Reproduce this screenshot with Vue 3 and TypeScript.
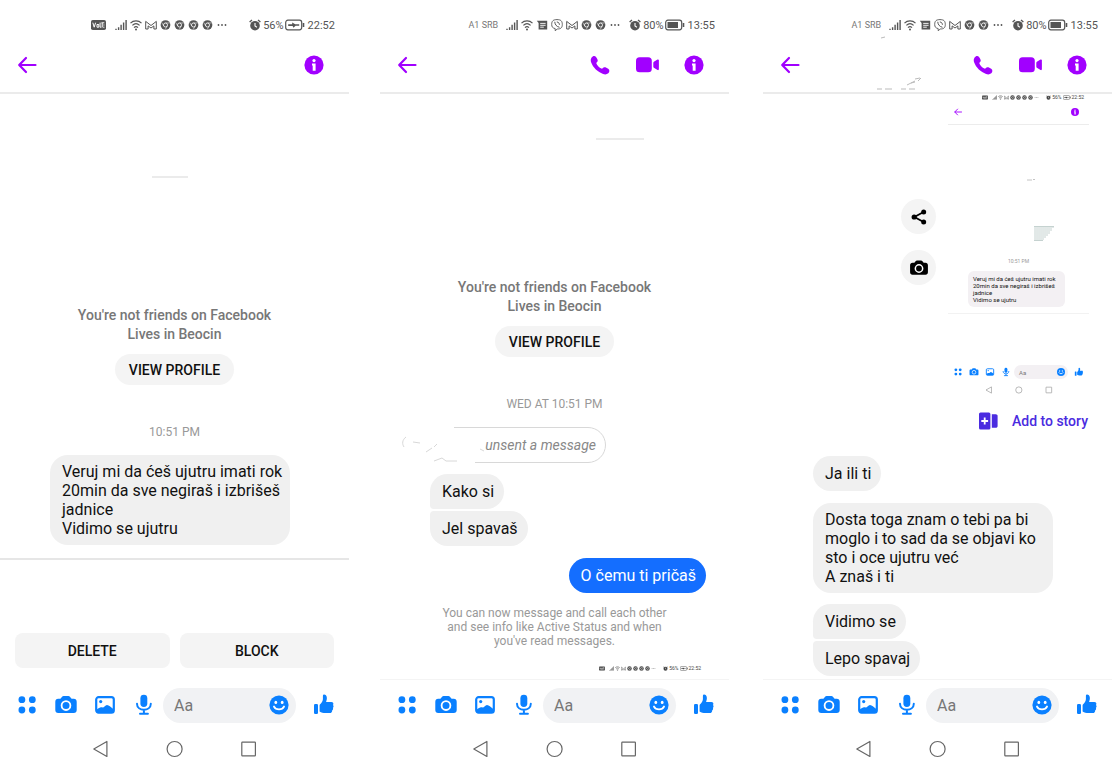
<script setup lang="ts">
interface Glyph {
  name: string
}

interface Phone {
  id: string
  carrier: string
  glyphs: Glyph[]
  charge: string
  battery: string
  clock: string
  calls: boolean
}

const chrome: Glyph = { name: 's-chrome' }

const requestGlyphs: Glyph[] = [
  { name: 's-signal' },
  { name: 's-wifi' },
  { name: 's-mail' },
  chrome,
  chrome,
  chrome,
  chrome,
  { name: 's-more' },
]

const chatGlyphs: Glyph[] = [
  { name: 's-signal' },
  { name: 's-wifi' },
  { name: 's-note' },
  { name: 's-viber' },
  { name: 's-mail' },
  chrome,
  chrome,
  { name: 's-more' },
]

const phones: Phone[] = [
  { id: 'request', carrier: '', glyphs: requestGlyphs, charge: '56%', battery: 's-charging', clock: '22:52', calls: false },
  { id: 'chat', carrier: 'A1 SRB', glyphs: chatGlyphs, charge: '80%', battery: 's-battery', clock: '13:55', calls: true },
  { id: 'shared', carrier: 'A1 SRB', glyphs: chatGlyphs, charge: '80%', battery: 's-battery', clock: '13:55', calls: true },
]

const tools = [
  { icon: 'dots', label: 'More actions' },
  { icon: 'camera', label: 'Camera' },
  { icon: 'photo', label: 'Gallery' },
  { icon: 'mic', label: 'Voice message' },
]

const navKeys = [
  { icon: 'n-back', label: 'Back' },
  { icon: 'n-home', label: 'Home' },
  { icon: 'n-recent', label: 'Recent apps' },
]

const threat = 'Veruj mi da ćeš ujutru imati rok\n20min da sve negiraš i izbrišeš\njadnice\nVidimo se ujutru'
const reply = 'Dosta toga znam o tebi pa bi moglo i to sad da se objavi ko sto i oce ujutru već\nA znaš i ti'
</script>

<template>
  <svg class="sprite" aria-hidden="true">
    <symbol id="back" viewBox="0 0 24 24">
      <path d="M20.5 12H4.5M11 5 4.2 12l6.8 7" fill="none" stroke="currentColor" stroke-width="2.2" stroke-linecap="round" stroke-linejoin="round" />
    </symbol>
    <symbol id="info" viewBox="0 0 24 24">
      <circle cx="12" cy="12" r="9.6" fill="currentColor" />
      <circle cx="12" cy="7.6" r="1.6" fill="#fff" />
      <path d="M10 10.4h3.6v7.4h-2.9v-5.4H10z" fill="#fff" />
    </symbol>
    <symbol id="call" viewBox="0 0 24 24">
      <path d="M3.6 4.6C4.8 2.6 7 2.4 8.2 4.2c.9 1.3 1.8 2.7 1.5 3.7-.3 1.1-1.7 1.6-1.3 2.7.8 2 2.900 4.200 5 5 1.100.4 1.700-1 2.800-1.300 1-.3 2.600.5 4 1.500 1.700 1.200 1.400 3.300.1 4.500-1.400 1.200-3.300 1.400-5.200.7C9.800 19.200 5 14.600 3.200 9.600c-.7-1.900-.6-3.500.4-5z" fill="currentColor" />
    </symbol>
    <symbol id="video" viewBox="0 0 24 24">
      <rect x="1" y="4.300" width="15.800" height="15" rx="3.600" fill="currentColor" />
      <path d="M18.300 10c0-.5.2-.9.6-1.200l3.600-2.200c.7-.4 1.400 0 1.400.7v9c0 .7-.7 1.100-1.400.7l-3.600-2.200c-.4-.3-.6-.7-.6-1.200z" fill="currentColor" />
    </symbol>
    <symbol id="dots" viewBox="0 0 24 24">
      <g fill="currentColor">
        <circle cx="6.900" cy="6.700" r="3.400" /><circle cx="17.300" cy="6.700" r="3.400" />
        <circle cx="6.900" cy="17" r="3.400" /><circle cx="17.300" cy="17" r="3.400" />
      </g>
    </symbol>
    <symbol id="camera" viewBox="0 0 24 24">
      <path d="M4.200 5.800h2.200l1.500-1.900c.5-.6 1-.8 1.700-.8h4.800c.7 0 1.200.2 1.700.8l1.500 1.900h2.200c1.800 0 2.900 1.100 2.900 2.900v8.400c0 1.800-1.100 2.900-2.900 2.900H4.200c-1.800 0-2.900-1.100-2.900-2.900V8.700c0-1.800 1.100-2.900 2.900-2.900z" fill="currentColor" />
      <circle cx="12" cy="12.600" r="4.400" fill="none" stroke="#fff" stroke-width="1.800" />
    </symbol>
    <symbol id="photo" viewBox="0 0 24 24">
      <rect x="3.200" y="4.200" width="17.600" height="15.400" rx="2.400" fill="none" stroke="currentColor" stroke-width="2.200" />
      <circle cx="7.700" cy="8.600" r="1.600" fill="currentColor" />
      <path d="M4 16.300c1.600-.9 2.700-2 4-2 .9 0 1.500.3 2.100.2 1.300-.2 2-2.600 3.900-2.600 2 0 3.700 2.300 6 3.800v3.800H4z" fill="currentColor" />
    </symbol>
    <symbol id="mic" viewBox="0 0 24 24">
      <rect x="8.400" y="1.700" width="6.900" height="12.300" rx="3.450" fill="currentColor" />
      <path d="M5 10.700c0 8.200 13.800 8.200 13.800 0M11.900 17v3.600M8 20.700h7.900" fill="none" stroke="currentColor" stroke-width="2" stroke-linecap="round" />
    </symbol>
    <symbol id="smile" viewBox="0 0 24 24">
      <circle cx="12" cy="12" r="9.600" fill="currentColor" />
      <ellipse cx="8.800" cy="9.400" rx="1.400" ry="1.700" fill="#fff" /><ellipse cx="15.200" cy="9.400" rx="1.400" ry="1.700" fill="#fff" />
      <path d="M7 13.600c1.800 3.700 8.200 3.700 10 0" fill="none" stroke="#fff" stroke-width="1.900" stroke-linecap="round" />
    </symbol>
    <symbol id="like" viewBox="0 0 24 24">
      <rect x="2" y="11" width="4" height="10" rx="1.200" fill="currentColor" />
      <path d="M7.600 12.400c.2-1.200 3.200-2.800 3.300-6.300V3c0-2 3-2 3.800.7.500 2-.1 3.800-.6 5.200h5.200c1.900 0 2.700 1.700 1.700 3 .8.900.8 2.200-.1 2.900.5 1.100.1 2.200-.8 2.700.2 1.500-.7 2.600-2.300 2.600h-4.400c-2.200 0-4-.5-5.800-1.600z" fill="currentColor" />
    </symbol>
    <symbol id="share" viewBox="0 0 24 24">
      <path d="M17.600 6 6.400 12l11.200 6" fill="none" stroke="currentColor" stroke-width="2.200" />
      <circle cx="17.600" cy="6" r="3" fill="currentColor" /><circle cx="6.200" cy="12" r="3.100" fill="currentColor" /><circle cx="17.600" cy="18" r="3" fill="currentColor" />
    </symbol>
    <symbol id="story" viewBox="0 0 24 24">
      <rect x="2" y="3.500" width="11.400" height="17" rx="1.500" fill="currentColor" />
      <path d="M14.800 5.300h3.900c1.200 0 1.900.7 1.900 1.800v9.800c0 1.100-.7 1.800-1.900 1.800h-3.900z" fill="currentColor" />
      <path d="M7.700 8.600v6.800M4.300 12h6.800" stroke="#fff" stroke-width="1.800" />
    </symbol>
    <symbol id="n-back" viewBox="0 0 24 24">
      <path d="M17.900 4.500v15L4.800 12z" fill="none" stroke="currentColor" stroke-width="1.200" stroke-linejoin="round" />
    </symbol>
    <symbol id="n-home" viewBox="0 0 24 24">
      <circle cx="11.600" cy="12" r="7.500" fill="none" stroke="currentColor" stroke-width="1.200" />
    </symbol>
    <symbol id="n-recent" viewBox="0 0 24 24">
      <rect x="4.800" y="5.200" width="13.600" height="13.600" rx=".6" fill="none" stroke="currentColor" stroke-width="1.200" />
    </symbol>
    <symbol id="s-volte" viewBox="0 0 15 12">
      <rect y="1" width="15" height="10" rx="1.800" fill="currentColor" />
      <path d="M1.800 3.700 3.200 8.200 4.600 3.700M6 5.500h1.800v2.700H6zM9.100 3.600v4.600h1.200M10.400 3.800h2.900M11.200 4v4.400M13.400 6h-1M13.400 8.200h-1.200" fill="none" stroke="#fff" stroke-width="1" />
    </symbol>
    <symbol id="s-signal" viewBox="0 0 12 12">
      <path d="M1 11V9.800M3.600 11V8.200M6.100 11V5.800M8.600 11V3.400M11.100 11V1" stroke="currentColor" stroke-width="1.400" />
    </symbol>
    <symbol id="s-wifi" viewBox="0 0 12 12">
      <path d="M.5 4.100c3-3 8-3 11 0M2.400 6.400c2.100-2 5.100-2 7.200 0M4 8.600c1.200-1.100 2.800-1.100 4 0" fill="none" stroke="currentColor" stroke-width="1.200" />
      <circle cx="6" cy="10.500" r="1" fill="currentColor" />
    </symbol>
    <symbol id="s-mail" viewBox="0 0 12 12">
      <path d="M.7 10V2.400L6 6.500l5.300-4.100V10H8.900V6.900L6 9 3.100 6.900V10z" fill="none" stroke="currentColor" stroke-width="1" stroke-linejoin="round" />
    </symbol>
    <symbol id="s-chrome" viewBox="0 0 12 12">
      <circle cx="6" cy="6" r="5.300" fill="currentColor" />
      <circle cx="6" cy="6" r="2.200" fill="none" stroke="#fff" stroke-width=".9" />
      <path d="M6 3.800h4.600M4.100 7.100 1.900 3.300M7.900 7.100l-2.300 3.900" stroke="#fff" stroke-width=".6" />
    </symbol>
    <symbol id="s-more" viewBox="0 0 12 12">
      <g fill="currentColor"><circle cx="2.500" cy="6" r=".9" /><circle cx="6" cy="6" r=".9" /><circle cx="9.500" cy="6" r=".9" /></g>
    </symbol>
    <symbol id="s-note" viewBox="0 0 12 12">
      <path d="M.8 1.800h10.400v8.700H2.600V4z" fill="currentColor" />
      <path d="M4.200 4.400h5.400M4.200 6.300h5.400M4.200 8.200h3.600" stroke="#fff" stroke-width=".9" />
    </symbol>
    <symbol id="s-viber" viewBox="0 0 12 12">
      <path d="M6 .6c3.700 0 5.300 1.200 5.300 4.900 0 3.600-1.900 4.500-5 4.500L4.200 11.700V9.600C1.700 9 .7 8 .7 5.400.7 1.800 2.400.6 6 .6z" fill="none" stroke="currentColor" stroke-width=".9" />
      <path d="M3.800 3.200c.2 2.500 1.600 4.300 4.300 5M6.200 3c1.400.2 2.100 1 2.200 2.400" fill="none" stroke="currentColor" stroke-width="1" stroke-linecap="round" />
    </symbol>
    <symbol id="s-alarm" viewBox="0 0 12 12">
      <circle cx="6" cy="6.700" r="4.800" fill="currentColor" />
      <path d="M.6 3 3 .9M11.400 3 9 .9" stroke="currentColor" stroke-width="1.300" />
      <path d="M6 4v3l1.900 1.200" fill="none" stroke="#fff" stroke-width="1.100" />
    </symbol>
    <symbol id="s-charging" viewBox="0 0 20 12">
      <rect x=".7" y="1.200" width="16" height="9.600" rx="2.200" fill="none" stroke="currentColor" stroke-width="1.200" />
      <path d="M18.500 4v4" stroke="currentColor" stroke-width="1.600" />
      <path d="M3.200 5.200h4V3.400l3 1.800h4v1.600h-3.600L8.400 8.800 7.600 7H3.200z" fill="currentColor" />
    </symbol>
    <symbol id="s-battery" viewBox="0 0 20 12">
      <rect x=".7" y="1.200" width="16" height="9.600" rx="2.200" fill="none" stroke="currentColor" stroke-width="1.200" />
      <path d="M18.500 4v4" stroke="currentColor" stroke-width="1.600" />
      <rect x="2.500" y="3" width="10.500" height="6" fill="currentColor" />
    </symbol>
  </svg>

  <main class="board">
    <section v-for="phone in phones" :key="phone.id" class="phone" :class="phone.id">
      <div class="status">
        <svg v-if="!phone.carrier" class="volte" aria-hidden="true"><use href="#s-volte" /></svg>
        <span v-else class="carrier">{{ phone.carrier }}</span>
        <span class="glyphs">
          <svg v-for="(g, i) in phone.glyphs" :key="i" class="glyph" :class="g.name" aria-hidden="true"><use :href="'#' + g.name" /></svg>
        </span>
        <span class="power">
          <svg class="alarm" aria-hidden="true"><use href="#s-alarm" /></svg>
          <span>{{ phone.charge }}</span>
          <svg class="battery" aria-hidden="true"><use :href="'#' + phone.battery" /></svg>
          <span>{{ phone.clock }}</span>
        </span>
      </div>

      <header class="topbar">
        <button class="icon" aria-label="Back"><svg><use href="#back" /></svg></button>
        <span class="actions">
          <button v-if="phone.calls" class="icon" aria-label="Call"><svg><use href="#call" /></svg></button>
          <button v-if="phone.calls" class="icon" aria-label="Video call"><svg><use href="#video" /></svg></button>
          <button class="icon" aria-label="Info"><svg><use href="#info" /></svg></button>
        </span>
        <svg v-if="phone.id === 'shared'" class="marks" viewBox="0 0 160 60" aria-hidden="true">
          <path d="M4 6l4-1M0 57h5M8 57h7M24 57h5M32 57h6M30 53l8-4M34 51l4-1M38 47l5-1M41 49l3-3" />
        </svg>
      </header>

      <div v-if="phone.id === 'request'" class="body">
        <i class="dash"></i>
        <p class="about">You're not friends on Facebook<br />Lives in Beocin</p>
        <button class="profile">VIEW PROFILE</button>
        <time class="stamp">10:51 PM</time>
        <p class="bubble">{{ threat }}</p>
        <hr class="rule" />
        <div class="decide">
          <button>DELETE</button>
          <button>BLOCK</button>
        </div>
      </div>

      <div v-else-if="phone.id === 'chat'" class="body">
        <i class="dash"></i>
        <p class="about">You're not friends on Facebook<br />Lives in Beocin</p>
        <button class="profile">VIEW PROFILE</button>
        <time class="stamp">WED AT 10:51 PM</time>
        <p class="unsent">
          <svg viewBox="0 0 205 36" aria-hidden="true">
            <path d="M53 .5h134a17.500 17.500 0 0 1 0 35H74" />
            <path d="M5 10c-4 3-4 7-2 10M12 15l7 1M25 25l6-4M33 20l3-3M33 34l8-3 4 3h11M79 22l4 2" />
          </svg>
          <span>unsent a message</span>
        </p>
        <p class="bubble first">Kako si</p>
        <p class="bubble last">Jel spavaš</p>
        <p class="bubble mine">O čemu ti pričaš</p>
        <p class="notice">You can now message and call each other and see info like Active Status and when you've read messages.</p>
        <div class="mini-status">
          <svg class="volte" aria-hidden="true"><use href="#s-volte" /></svg>
          <span class="glyphs">
            <svg v-for="(g, i) in requestGlyphs" :key="i" class="glyph" aria-hidden="true"><use :href="'#' + g.name" /></svg>
          </span>
          <span class="power">
            <svg class="alarm" aria-hidden="true"><use href="#s-alarm" /></svg>
            <span>56%</span>
            <svg class="battery" aria-hidden="true"><use href="#s-charging" /></svg>
            <span>22:52</span>
          </span>
        </div>
      </div>

      <div v-else class="body">
        <div class="shared-row">
          <div class="side">
            <button class="round" aria-label="Share"><svg><use href="#share" /></svg></button>
            <button class="round" aria-label="Open camera"><svg><use href="#camera" /></svg></button>
          </div>
          <div class="thumb">
            <div class="mini-status">
              <svg class="volte" aria-hidden="true"><use href="#s-volte" /></svg>
              <span class="glyphs">
                <svg v-for="(g, i) in requestGlyphs" :key="i" class="glyph" aria-hidden="true"><use :href="'#' + g.name" /></svg>
              </span>
              <span class="power">
                <svg class="alarm" aria-hidden="true"><use href="#s-alarm" /></svg>
                <span>56%</span>
                <svg class="battery" aria-hidden="true"><use href="#s-charging" /></svg>
                <span>22:52</span>
              </span>
            </div>
            <div class="mini-top">
              <svg aria-hidden="true"><use href="#back" /></svg>
              <svg aria-hidden="true"><use href="#info" /></svg>
            </div>
            <svg class="scratch" viewBox="0 0 10 4" aria-hidden="true"><path d="M0 3h5M6 2.500h2" /></svg>
            <svg class="avatar" viewBox="0 0 22 16" aria-hidden="true">
              <path d="M1 0v15M3 0v15M5 0v15M7 0v15M9 0v14M11 0v12M13 0v10M15 0v8M17 0v5M19 0v2" />
              <path d="M0 .5h20M0 14.500h9" />
            </svg>
            <time class="mini-stamp">10:51 PM</time>
            <p class="mini-bubble">{{ threat }}</p>
            <div class="mini-composer">
              <svg v-for="t in tools" :key="t.icon" aria-hidden="true"><use :href="'#' + t.icon" /></svg>
              <span class="mini-field"><span>Aa</span><svg aria-hidden="true"><use href="#smile" /></svg></span>
              <svg aria-hidden="true"><use href="#like" /></svg>
            </div>
            <div class="mini-nav">
              <svg v-for="k in navKeys" :key="k.icon" aria-hidden="true"><use :href="'#' + k.icon" /></svg>
            </div>
          </div>
        </div>
        <button class="story"><svg aria-hidden="true"><use href="#story" /></svg>Add to story</button>
        <p class="bubble">Ja ili ti</p>
        <p class="bubble long">{{ reply }}</p>
        <p class="bubble first">Vidimo se</p>
        <p class="bubble last">Lepo spavaj</p>
      </div>

      <form class="composer" @submit.prevent>
        <span class="tools">
          <button v-for="t in tools" :key="t.icon" type="button" class="icon" :aria-label="t.label"><svg><use :href="'#' + t.icon" /></svg></button>
        </span>
        <span class="field">
          <input type="text" placeholder="Aa" aria-label="Message" />
          <button type="button" class="icon" aria-label="Emoji"><svg><use href="#smile" /></svg></button>
        </span>
        <button type="button" class="icon" aria-label="Like"><svg><use href="#like" /></svg></button>
      </form>

      <nav class="nav">
        <button v-for="k in navKeys" :key="k.icon" class="icon" :aria-label="k.label"><svg><use :href="'#' + k.icon" /></svg></button>
      </nav>
    </section>
  </main>
</template>

<style>
body {
  margin: 0;
  background: #fff;
}
</style>

<style scoped>
.sprite {
  position: absolute;
  width: 0;
  height: 0;
}

.board {
  display: grid;
  grid-template-columns: 1fr 31px 1fr 34px 1fr;
  min-height: 100vh;
  padding-right: 2px;
  box-sizing: border-box;
  font-family: Roboto, "Noto Sans", sans-serif;
  color: #111;
}

.request { grid-column: 1; }
.chat { grid-column: 3; }
.shared { grid-column: 5; }

.phone {
  display: flex;
  flex-direction: column;
  min-width: 0;
}

p { margin: 0; }

button {
  padding: 0;
  border: 0;
  background: none;
  color: inherit;
  font: inherit;
  cursor: pointer;
}

.icon {
  flex: none;
  width: 24px;
  height: 24px;
}

.icon svg {
  display: block;
  width: 24px;
  height: 24px;
  overflow: visible;
}

/* status bar */
.status {
  display: flex;
  align-items: center;
  justify-content: flex-end;
  height: 50px;
  padding-right: 14px;
  box-sizing: border-box;
  font-size: 11px;
  color: #555;
}

.glyphs,
.power {
  display: flex;
  align-items: center;
}

.status .volte { width: 15px; height: 12px; margin-right: 9px; }
.carrier { font-size: 9px; margin-right: 8px; color: #777; }
.status .glyphs { gap: 3px; margin-right: 8px; }
.request .status .glyphs { margin-right: 21px; }
.status .glyph { width: 12px; height: 12px; }
.status .s-chrome { width: 11px; }
.status .alarm { width: 12px; height: 12px; margin-right: 2px; }
.status .battery { width: 20px; height: 12px; margin: 0 3px 0 1px; }

/* title bar */
.topbar {
  position: relative;
  display: flex;
  align-items: center;
  justify-content: space-between;
  height: 44px;
  padding: 0 23px 12px 15px;
  box-sizing: border-box;
  border-bottom: 2px solid #ebebeb;
  color: #a100ff;
}

.actions {
  display: flex;
  gap: 23px;
}

.marks {
  position: absolute;
  left: 114px;
  bottom: 0;
  width: 160px;
  height: 60px;
  fill: none;
  stroke: #bbb;
  stroke-width: 1;
}

/* conversation */
.body {
  flex: 1;
  display: flex;
  flex-direction: column;
}

.dash {
  width: 36px;
  height: 2px;
  margin: 82px 0 0 152px;
  background: #ebebeb;
}

.about {
  margin-top: 128px;
  text-align: center;
  font-size: 14px;
  font-weight: 500;
  line-height: 19px;
  color: #777;
}

.profile {
  align-self: center;
  height: 31px;
  margin-top: 10px;
  padding: 0 14px;
  border-radius: 16px;
  background: #f4f4f4;
  font-size: 14px;
  font-weight: 500;
  color: #111;
}

.stamp {
  margin-top: 40px;
  text-align: center;
  font-size: 12px;
  line-height: 14px;
  color: #999;
}

.bubble {
  display: flex;
  align-items: center;
  align-self: flex-start;
  min-height: 35px;
  max-width: 240px;
  margin-left: 50px;
  padding: 7px 10px 7px 12px;
  box-sizing: border-box;
  border-radius: 18px;
  background: #f0f0f0;
  font-size: 16px;
  line-height: 19px;
  white-space: pre-line;
}

.request .bubble {
  width: 240px;
  margin-top: 16px;
  white-space: pre;
}

.first {
  margin-top: 12px;
  border-bottom-left-radius: 4px;
}

.last {
  margin-top: 2px;
  border-top-left-radius: 4px;
}

.rule {
  width: 100%;
  height: 2px;
  margin: 13px 0 0;
  border: 0;
  background: #e6e6e6;
}

.decide {
  display: grid;
  grid-template-columns: 1fr 1fr;
  gap: 10px;
  margin: 73px 15px 0;
}

.decide button {
  height: 35px;
  border-radius: 8px;
  background: #f4f4f4;
  font-size: 14px;
  font-weight: 500;
  color: #111;
}

.chat .dash {
  width: 48px;
  margin: 44px 0 0 216px;
}

.chat .about { margin-top: 138px; }

.unsent {
  position: relative;
  display: flex;
  align-items: center;
  justify-content: flex-end;
  width: 205px;
  height: 36px;
  margin: 16px 0 0 21px;
  padding-right: 10px;
  box-sizing: border-box;
  font-size: 14px;
  font-style: italic;
  color: #888;
}

.unsent svg {
  position: absolute;
  inset: 0;
  width: 205px;
  height: 36px;
  fill: none;
  stroke: #d8d8d8;
}

.chat .first { margin-top: 11px; }

.mine {
  align-self: flex-end;
  margin: 12px 23px 0 0;
  background: #146eff;
  color: #fff;
}

.notice {
  width: 225px;
  margin-top: 13px;
  align-self: center;
  text-align: center;
  font-size: 12px;
  line-height: 14px;
  color: #999;
}

/* small status line */
.mini-status {
  display: flex;
  align-items: center;
  justify-content: flex-end;
  height: 6px;
  font-size: 5px;
  line-height: 6px;
  color: #444;
}

.chat .mini-status {
  margin: 17px 28px 0 0;
}

.mini-status .volte { width: 6px; height: 5px; margin-right: 4px; }
.mini-status .glyphs { gap: 1px; margin-right: 7px; }
.mini-status .glyph { width: 5px; height: 5px; }
.mini-status .alarm { width: 5px; height: 5px; margin-right: 1px; }
.mini-status .battery { width: 8px; height: 5px; margin: 0 1px; }

/* shared screenshot */
.shared-row {
  display: flex;
  justify-content: flex-end;
  gap: 12px;
  padding-right: 23px;
}

.side {
  display: flex;
  flex-direction: column;
  gap: 16px;
  padding-top: 105px;
}

.round {
  display: grid;
  place-items: center;
  width: 35px;
  height: 35px;
  border-radius: 50%;
  background: #f4f4f4;
  color: #000;
}

.round svg { width: 20px; height: 20px; }

.thumb {
  display: flex;
  flex-direction: column;
  width: 141px;
}

.thumb .mini-status { padding-right: 5px; }

.mini-top {
  display: flex;
  align-items: center;
  justify-content: space-between;
  height: 24px;
  padding: 0 9px 0 5px;
  border-bottom: 1px solid #ececec;
  color: #a100ff;
}

.mini-top svg { width: 10px; height: 10px; }

.scratch {
  width: 10px;
  height: 4px;
  margin: 52px 0 0 79px;
  stroke: #c4c4c4;
}

.avatar {
  width: 22px;
  height: 16px;
  margin: 45px 0 0 86px;
  fill: none;
  stroke: #c5d2d0;
}

.mini-stamp {
  margin-top: 16px;
  text-align: center;
  font-size: 5px;
  line-height: 6px;
  color: #999;
}

.mini-bubble {
  width: 97px;
  margin: 7px 0 0 20px;
  padding: 4px 5px;
  box-sizing: border-box;
  border-radius: 6px;
  background: #f3f0f3;
  font-size: 6px;
  line-height: 7px;
  white-space: pre-line;
}

.mini-composer {
  display: flex;
  align-items: center;
  gap: 6px;
  height: 14px;
  margin-top: 6px;
  padding: 51px 5px 0;
  border-top: 1px solid #f2f2f2;
  color: #0a80ff;
}

.mini-composer svg {
  flex: none;
  width: 10px;
  height: 10px;
}

.mini-field {
  flex: 1;
  display: flex;
  align-items: center;
  justify-content: space-between;
  height: 14px;
  margin-left: -3px;
  padding: 0 2px 0 5px;
  border-radius: 7px;
  background: #f3f0f3;
  font-size: 6px;
}

.mini-field span { color: #777; }

.mini-nav {
  display: flex;
  justify-content: center;
  gap: 20px;
  margin-top: 6px;
  color: #777;
}

.mini-nav svg { width: 10px; height: 10px; }

.story {
  display: flex;
  align-items: center;
  align-self: flex-end;
  gap: 11px;
  height: 24px;
  margin: 14px 24px 0 0;
  font-size: 14px;
  font-weight: 500;
  color: #4a2be0;
}

.story svg { width: 24px; height: 24px; }

.story + .bubble { margin-top: 23px; }
.long { margin-top: 12px; }
.long + .first { margin-top: 11px; }

/* composer */
.composer {
  display: flex;
  align-items: center;
  height: 51px;
  padding: 0 13px 0 15px;
  box-sizing: border-box;
  border-top: 1px solid #f4f4f4;
  color: #0a80ff;
}

.request .composer { border-top-color: #fff; }

.tools {
  display: flex;
  gap: 15px;
}

.field {
  flex: 1;
  display: flex;
  align-items: center;
  min-width: 0;
  height: 35px;
  margin: 0 16px 0 7px;
  padding: 0 5px 0 11px;
  box-sizing: border-box;
  border-radius: 18px;
  background: #f1f2f4;
}

.field input {
  flex: 1;
  min-width: 0;
  padding: 0;
  border: 0;
  outline: 0;
  background: none;
  font: inherit;
  font-size: 16px;
  color: #111;
}

.field input::placeholder { color: #777; }

.nav {
  display: flex;
  justify-content: center;
  gap: 50px;
  height: 31px;
  padding-top: 7px;
  color: #666;
}
</style>
